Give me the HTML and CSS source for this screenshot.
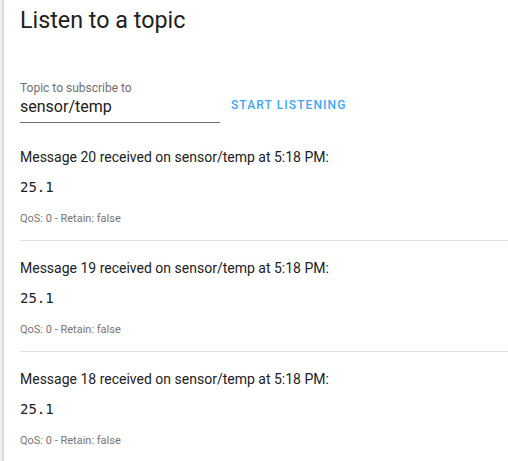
FILE: index.html
```html
<!DOCTYPE html>
<html>
<head>
<meta charset="utf-8">
<link rel="stylesheet" href="styles.css">
</head>
<body>
<div class="card">
  <h1 class="title">Listen to a topic</h1>
  <div class="subscribe">
    <label class="field">
      <span class="field-label">Topic to subscribe to</span>
      <span class="field-input">sensor/temp</span>
    </label>
    <button class="btn">Start listening</button>
  </div>
  <div class="messages">
    <div class="message">
      <div class="message-head">Message 20 received on sensor/temp at 5:18 PM:</div>
      <pre class="payload">25.1</pre>
      <div class="meta">QoS: 0 - Retain: false</div>
    </div>
    <div class="message">
      <div class="message-head">Message 19 received on sensor/temp at 5:18 PM:</div>
      <pre class="payload">25.1</pre>
      <div class="meta">QoS: 0 - Retain: false</div>
    </div>
    <div class="message">
      <div class="message-head">Message 18 received on sensor/temp at 5:18 PM:</div>
      <pre class="payload">25.1</pre>
      <div class="meta">QoS: 0 - Retain: false</div>
    </div>
  </div>
</div>
</body>
</html>
```

FILE: styles.css
```css
html, body {
  margin: 0;
  padding: 0;
  background: #f2f2f2;
  height: 100%;
  overflow: hidden;
}
body {
  font-family: Roboto, "Noto Sans", sans-serif;
  color: #212121;
}
.card {
  margin-left: 4px;
  background: #fff;
  min-height: 100%;
  padding: 4px 0 0 16px;
  box-shadow: -1px 0 2px rgba(0,0,0,0.12), -2px 0 3px rgba(0,0,0,0.05);
}
.title {
  margin: 0;
  font-size: 23.3px;
  line-height: 32px;
  font-weight: 400;
  color: #212121;
}
.subscribe {
  margin-top: 44px;
  display: flex;
  align-items: flex-end;
  gap: 3px;
}
.field {
  display: flex;
  flex-direction: column;
  width: 200px;
  border-bottom: 1px solid #6b6b6b;
}
.field-label {
  font-size: 12px;
  line-height: 16px;
  color: #6f6f6f;
}
.field-input {
  font-size: 16px;
  line-height: 20px;
  padding: 1px 0 5px;
  color: #212121;
}
.btn {
  border: 0;
  background: none;
  font-family: Roboto, sans-serif;
  font-weight: 500;
  font-size: 12px;
  letter-spacing: 1.1px;
  text-transform: uppercase;
  color: #42a5f5;
  padding: 8px 8px 10px;
  line-height: 16px;
}
.messages {
  margin-top: 24px;
}
.message {
  padding: 0 0 13px;
  margin-bottom: 17px;
  border-bottom: 1px solid #e0e0e0;
}
.message-head {
  font-size: 14px;
  line-height: 20px;
}
.payload {
  margin: 10px 0 14px;
  font-family: "DejaVu Sans Mono", monospace;
  font-size: 14px;
  line-height: 20px;
}
.meta {
  font-size: 11px;
  line-height: 16px;
  color: #757575;
}
```
